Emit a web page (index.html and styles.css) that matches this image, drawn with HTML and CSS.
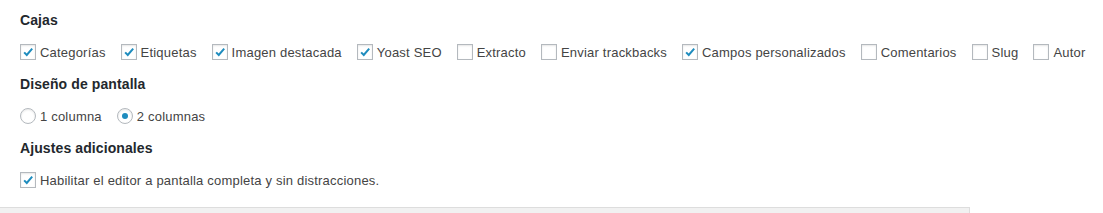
FILE: index.html
```html
<!DOCTYPE html>
<html lang="es">
<head>
    <meta charset="UTF-8">
    <title>Opciones de pantalla</title>
    <link rel="stylesheet" href="styles.css">
</head>
<body>
<div class="prefs">
    <fieldset class="group">
        <h5>Cajas</h5>
        <div class="row">
            <label class="opt"><span class="box checked"><svg viewBox="0 0 16 16"><path d="M3.6 8.4 L6.6 11.4 L12.8 4.2"/></svg></span>Categorías</label>
            <label class="opt"><span class="box checked"><svg viewBox="0 0 16 16"><path d="M3.6 8.4 L6.6 11.4 L12.8 4.2"/></svg></span>Etiquetas</label>
            <label class="opt"><span class="box checked"><svg viewBox="0 0 16 16"><path d="M3.6 8.4 L6.6 11.4 L12.8 4.2"/></svg></span>Imagen destacada</label>
            <label class="opt"><span class="box checked"><svg viewBox="0 0 16 16"><path d="M3.6 8.4 L6.6 11.4 L12.8 4.2"/></svg></span>Yoast SEO</label>
            <label class="opt"><span class="box"></span>Extracto</label>
            <label class="opt"><span class="box"></span>Enviar trackbacks</label>
            <label class="opt"><span class="box checked"><svg viewBox="0 0 16 16"><path d="M3.6 8.4 L6.6 11.4 L12.8 4.2"/></svg></span>Campos personalizados</label>
            <label class="opt"><span class="box"></span>Comentarios</label>
            <label class="opt"><span class="box"></span>Slug</label>
            <label class="opt"><span class="box"></span>Autor</label>
        </div>
    </fieldset>

    <fieldset class="group">
        <h5>Diseño de pantalla</h5>
        <div class="row">
            <label class="opt"><span class="radio"></span>1 columna</label>
            <label class="opt"><span class="radio on"></span>2 columnas</label>
        </div>
    </fieldset>

    <fieldset class="group">
        <h5>Ajustes adicionales</h5>
        <div class="row">
            <label class="opt"><span class="box checked"><svg viewBox="0 0 16 16"><path d="M3.6 8.4 L6.6 11.4 L12.8 4.2"/></svg></span>Habilitar el editor a pantalla completa y sin distracciones.</label>
        </div>
    </fieldset>
</div>
<div class="toolbar"></div>
</body>
</html>
```

FILE: styles.css
```css
body {
    margin: 0;
    background: #fff;
    font-family: "Liberation Sans", Arial, sans-serif;
    font-size: 13px;
    color: #444;
}

.prefs {
    padding: 11px 20px 0;
}

.group {
    border: 0;
    margin: 0 0 8px;
    padding: 0;
}

.group h5 {
    margin: 0 0 8px;
    font-size: 14px;
    line-height: 18px;
    font-weight: 700;
    color: #23282d;
    letter-spacing: 0.1px;
}

.row {
    display: flex;
    align-items: center;
    height: 30px;
}

.opt {
    display: inline-flex;
    align-items: center;
    margin-right: 15px;
    white-space: nowrap;
    letter-spacing: 0.2px;
}

.box {
    width: 14px;
    height: 14px;
    border: 1px solid #b4b9be;
    background: #fff;
    box-shadow: inset 0 1px 2px rgba(0, 0, 0, .1);
    margin-right: 4px;
    display: inline-flex;
    flex-shrink: 0;
}

.box svg {
    width: 14px;
    height: 14px;
}

.box path {
    fill: none;
    stroke: #1e8cbe;
    stroke-width: 2.3;
}

.radio {
    width: 14px;
    height: 14px;
    border: 1px solid #b4b9be;
    border-radius: 50%;
    background: #fff;
    box-shadow: inset 0 1px 2px rgba(0, 0, 0, .1);
    margin-right: 4px;
    display: inline-flex;
    align-items: center;
    justify-content: center;
    flex-shrink: 0;
}

.radio.on::before {
    content: "";
    width: 6px;
    height: 6px;
    border-radius: 50%;
    background: #1e8cbe;
}

.toolbar {
    margin-top: 12px;
    width: 969px;
    height: 8px;
    background: #f1f1f1;
    border-top: 1px solid #ddd;
    border-right: 1px solid #ddd;
}
```
